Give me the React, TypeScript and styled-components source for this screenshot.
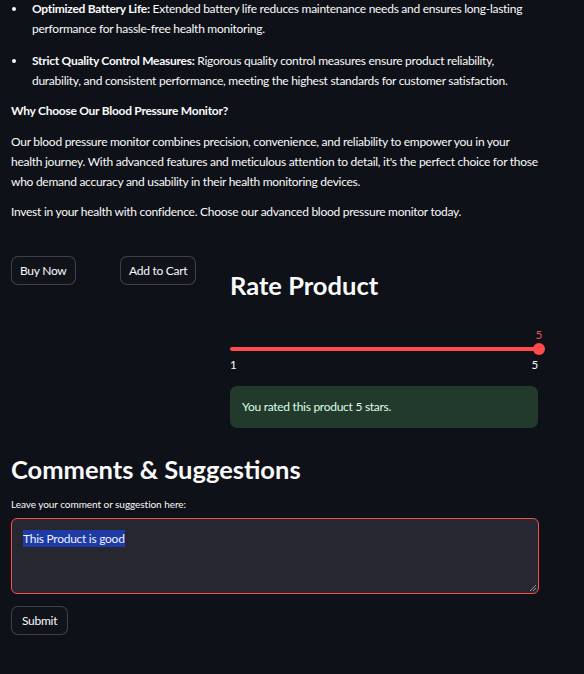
import React from "react";
import styled, { createGlobalStyle } from "styled-components";

const Global = createGlobalStyle`
  html, body { margin: 0; padding: 0; background: #0e1117; }
  body {
    font-family: Lato, "Noto Sans", sans-serif;
    color: #fafafa;
    font-size: 12px;
    letter-spacing: -0.27px;
    line-height: 20px;
  }
  * { box-sizing: border-box; }
`;

const Page = styled.div`
  width: 584px;
  min-height: 674px;
  padding: 0 45px 0 11px;
  margin-top: -1px;
  display: flex;
  flex-direction: column;
`;

const List = styled.ul`
  margin: 0;
  padding: 0;
  list-style: none;
`;

const Item = styled.li`
  display: grid;
  grid-template-columns: 21px 1fr;
  margin: 0 0 12px 0;
  &:last-child { margin-bottom: 10px; }
`;

const Bullet = styled.span`
  display: block;
  width: 4px;
  height: 4px;
  border-radius: 50%;
  background: #fafafa;
  margin: 8px 0 0 1px;
`;

const Bold = styled.strong`
  font-weight: 700;
`;

const Para = styled.p<{ $gap?: number }>`
  margin: 0 0 ${(p) => p.$gap ?? 10}px 0;
`;

const Row = styled.div`
  display: grid;
  grid-template-columns: 99px 100px 308px;
  column-gap: 10px;
  align-items: start;
  margin-top: 34px;
`;

const Button = styled.button<{ $pad?: number }>`
  font-family: inherit;
  font-size: 12px;
  letter-spacing: -0.27px;
  color: #fafafa;
  background: #10131a;
  border: 1px solid rgba(250, 250, 250, 0.2);
  border-radius: 7px;
  height: 29px;
  padding: 0 ${(p) => p.$pad ?? 8}px;
  line-height: 27px;
  cursor: pointer;
  justify-self: start;
`;

const Column = styled.div`
  display: flex;
  flex-direction: column;
`;

const H2 = styled.h2<{ $top?: number }>`
  margin: ${(p) => p.$top ?? 0}px 0 0 0;
  font-size: 25.5px;
  line-height: 31px;
  font-weight: 700;
  letter-spacing: 0;
`;

const Slider = styled.div`
  margin-top: 26px;
  display: flex;
  flex-direction: column;
`;

const ValueLabel = styled.div`
  align-self: flex-end;
  color: #f0504a;
  font-size: 11.5px;
  line-height: 16px;
  margin-right: -4px;
`;

const Track = styled.div`
  position: relative;
  height: 12px;
  display: flex;
  align-items: center;
  &::before {
    content: "";
    display: block;
    width: 100%;
    height: 4px;
    border-radius: 2px;
    background: #ff4b4b;
  }
`;

const Thumb = styled.span`
  position: absolute;
  right: -7px;
  top: 0;
  width: 12px;
  height: 12px;
  border-radius: 50%;
  background: #ff4b4b;
`;

const Ticks = styled.div`
  display: flex;
  justify-content: space-between;
  font-size: 11.5px;
  line-height: 16px;
  margin-top: 2px;
`;

const Success = styled.div`
  margin-top: 13px;
  background: #213a2b;
  color: #dffde9;
  border-radius: 7px;
  height: 42px;
  padding: 11px 12px;
  line-height: 20px;
`;

const Label = styled.div`
  font-size: 10px;
  letter-spacing: -0.05px;
  line-height: 14px;
  margin-top: 12px;
  margin-bottom: 7px;
`;

const TextArea = styled.div`
  position: relative;
  width: 528px;
  height: 76px;
  background: #262730;
  border: 1px solid #ff4b4b;
  border-radius: 6px;
  padding: 12px 11px;
  line-height: 16px;
`;

const Selected = styled.span`
  background: #1d3aa5;
  color: #eef1ff;
  padding: 1px 0;
`;

const Resize = styled.svg`
  position: absolute;
  right: 1px;
  bottom: 1px;
`;

const SubmitRow = styled.div`
  margin-top: 12px;
`;

export default function App() {
  return (
    <>
      <Global />
      <Page>
        <List>
          <Item>
            <Bullet />
            <span>
              <Bold>Optimized Battery Life:</Bold> Extended battery life reduces maintenance needs and ensures long-lasting performance for hassle-free health monitoring.
            </span>
          </Item>
          <Item>
            <Bullet />
            <span>
              <Bold>Strict Quality Control Measures:</Bold> Rigorous quality control measures ensure product reliability, durability, and consistent performance, meeting the highest standards for customer satisfaction.
            </span>
          </Item>
        </List>
        <Para $gap={11}>
          <Bold>Why Choose Our Blood Pressure Monitor?</Bold>
        </Para>
        <Para>
          Our blood pressure monitor combines precision, convenience, and reliability to empower you in your health journey. With advanced features and meticulous attention to detail, it's the perfect choice for those who demand accuracy and usability in their health monitoring devices.
        </Para>
        <Para $gap={0}>Invest in your health with confidence. Choose our advanced blood pressure monitor today.</Para>
        <Row>
          <Button>Buy Now</Button>
          <Button>Add to Cart</Button>
          <Column>
            <H2 $top={14}>Rate Product</H2>
            <Slider>
              <ValueLabel>5</ValueLabel>
              <Track>
                <Thumb />
              </Track>
              <Ticks>
                <span>1</span>
                <span>5</span>
              </Ticks>
            </Slider>
            <Success>You rated this product 5 stars.</Success>
          </Column>
        </Row>
        <H2 $top={26}>Comments &amp; Suggestions</H2>
        <Label>Leave your comment or suggestion here:</Label>
        <TextArea>
          <Selected>This Product is good</Selected>
          <Resize width="9" height="9" viewBox="0 0 9 9">
            <path d="M8 2 L2 8 M8 5 L5 8" stroke="#9a9aa0" strokeWidth="1" />
          </Resize>
        </TextArea>
        <SubmitRow>
          <Button $pad={10}>Submit</Button>
        </SubmitRow>
      </Page>
    </>
  );
}
